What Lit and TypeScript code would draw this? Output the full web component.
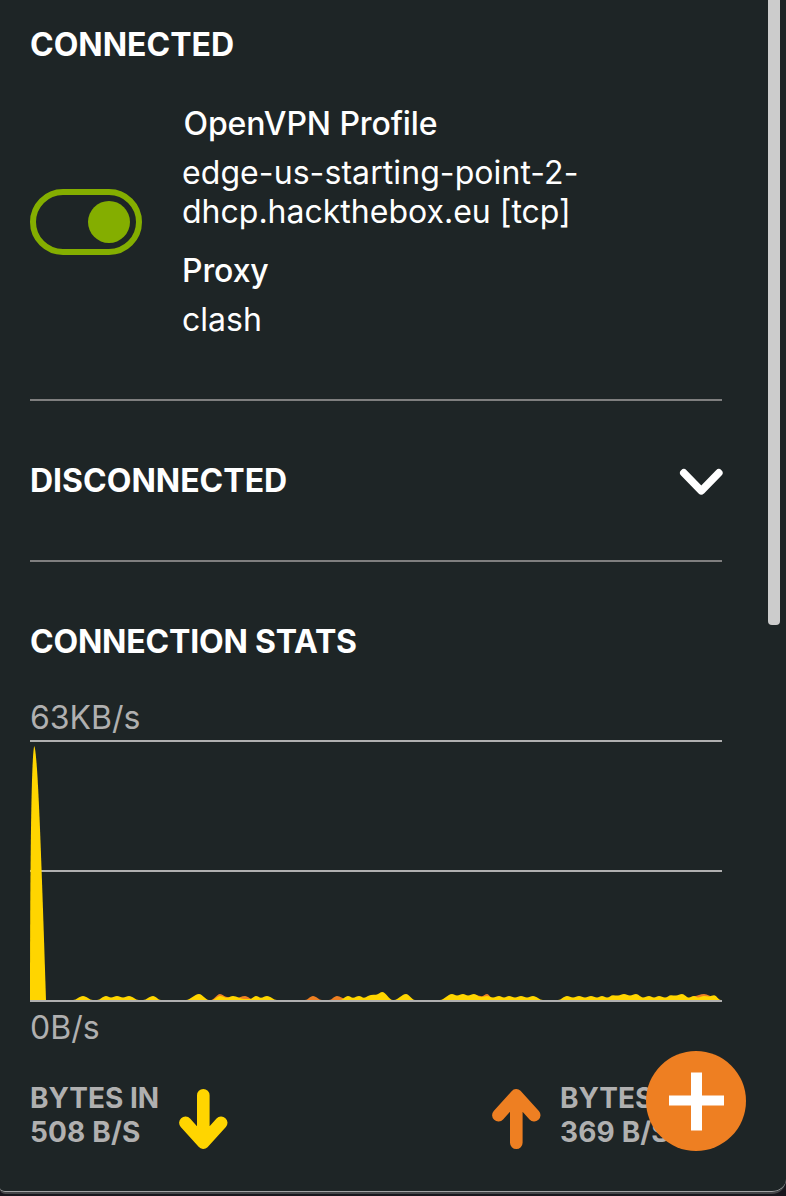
import { LitElement, html, css, svg } from "lit";
import { customElement } from "lit/decorators.js";

type Point = [x: number, height: number];

const BASE = 260;

// Each run is a stretch of traffic between two idle moments.
const OUT: Point[][] = [
  [[181, 0], [190, 6], [197, 3], [206, 2], [215, 4], [224, 0]],
  [[275, 0], [283, 4], [292, 0]],
  [[299, 0], [307, 4], [316, 1], [322, 0]],
  [[444, 0], [446, 4.5], [452, 3.8], [457, 6], [464, 0]],
  [[655, 0], [664, 3.8], [674, 6], [684, 3], [689, 0]],
];

const IN: Point[][] = [
  [[43, 0], [53, 4], [63, 0]],
  [[67, 0], [76, 4], [81, 2.6], [87, 4], [93, 2.6], [99, 4], [109, 0]],
  [[113, 0], [123, 4], [131, 0]],
  [[156, 0], [169, 6], [179, 0]],
  [[182, 0], [190, 4], [197, 2.3], [203, 4], [214, 1], [220, 1], [226, 4], [231, 2.3], [237, 4], [247, 0]],
  [[310, 0], [318, 4], [323, 2.3], [329, 4], [334, 2.3], [341, 5], [346, 5.2], [352, 8], [363, 0]],
  [[364, 0], [376, 6], [385, 0]],
  [[410, 0], [422, 6], [427, 4.6], [433, 6], [438, 4.6], [444, 6], [451, 3], [457, 4], [463, 2.4], [469, 4], [474, 2.4], [479, 4], [485, 2.4], [491, 4], [497, 2.4], [503, 4], [513, 0]],
  [[528, 0], [537, 4], [543, 2.4], [549, 4], [555, 2.4], [561, 4], [567, 2.4], [572, 4], [577, 2.4], [583, 4.8], [588, 4.4], [594, 6], [600, 4.6], [606, 6], [613, 2.6], [619, 4], [624, 2.4], [629, 4], [635, 2.4], [641, 4.8], [646, 4.4], [652, 6], [659, 2.4], [664, 4], [668, 2.6], [674, 4], [679, 3.6], [684, 4.8], [691, 0]],
];

function area(run: Point[]): string {
  let d = `M${run[0][0]} ${BASE}`;
  for (let i = 1; i < run.length; i++) {
    const [x0, h0] = run[i - 1];
    const [x1, h1] = run[i];
    const k = (x1 - x0) * 0.36;
    d += `C${x0 + k} ${BASE - h0} ${x1 - k} ${BASE - h1} ${x1} ${BASE - h1}`;
  }
  return d + "Z";
}

@customElement("traffic-chart")
export class TrafficChart extends LitElement {
  static styles = css`
    :host { display: block; height: 262px; }
    .plot { display: block; width: 692px; height: 262px; }
    .grid { fill: #b0b0b0; }
    .in { fill: #ffd500; }
    .out { fill: #ee7f22; }
  `;

  render() {
    return html`<svg class="plot" viewBox="0 0 692 262">
      <rect class="grid" width="692" height="2" />
      <rect class="grid" y="130" width="692" height="2" />
      ${OUT.map((r) => svg`<path class="out" d=${area(r)} />`)}
      ${IN.map((r) => svg`<path class="in" d=${area(r)} />`)}
      <path class="in" d="M0 260C0 150 1 14 4.3 6C7.5 14 10.5 90 16 260Z" />
      <rect class="grid" y="260" width="692" height="2" />
    </svg>`;
  }
}

@customElement("app-root")
export class AppRoot extends LitElement {
  static styles = css`
    :host {
      display: block;
      position: relative;
      box-sizing: border-box;
      width: 786px;
      height: 1196px;
      overflow: hidden;
      background: #17151c;
      color: #fff;
      font: 400 32px/39px Inter, "Liberation Sans", sans-serif;
    }
    .window {
      position: relative;
      display: flex;
      justify-content: space-between;
      box-sizing: border-box;
      height: 1194px;
      border: solid #434447;
      border-width: 0 0 2px 0;
      border-radius: 0 0 14px 5px;
      background: #1e2526;
      box-shadow: inset 0 -1px #a0a1a3;
      overflow: hidden;
    }
    .content { width: 692px; padding: 25px 0 0 30px; }
    .track { width: 18px; }
    .thumb { width: 12px; height: 625px; background: #ccc; border-radius: 0 0 4px 4px; }
    .title { margin: 0; font-size: 32px; font-weight: 700; white-space: nowrap; }
    .rule { height: 2px; background: #7f7f7f; }
    .connection { display: flex; align-items: center; gap: 40px; margin: 40px 0 60px; }
    .toggle {
      display: flex;
      justify-content: flex-end;
      align-items: center;
      box-sizing: border-box;
      width: 112px;
      height: 66px;
      padding: 0 6px;
      border: 6px solid #84ae00;
      border-radius: 33px;
    }
    .knob { width: 42px; height: 42px; border-radius: 50%; background: #84ae00; }
    .details { display: grid; gap: 10px; white-space: nowrap; }
    .label { font-weight: 500; letter-spacing: -0.1px; }
    .first { padding-left: 1.5px; }
    .proxy { margin-top: 10px; }
    .host { letter-spacing: 0.08px; }
    .domain { letter-spacing: 0; }
    .disconnected { display: flex; justify-content: space-between; align-items: center; height: 159px; }
    .chevron { display: block; width: 44px; height: 28px; margin: 3px -1px 0 0; }
    .stats { margin: 60px 0 37px; letter-spacing: -0.2px; }
    .axis { color: #b0b0b0; }
    .top { margin-bottom: 3px; }
    .bottom { margin-top: 6px; }
    .totals { display: flex; justify-content: space-between; margin-top: 34px; width: 692px; }
    .total {
      display: flex;
      gap: 20px;
      color: #b0b0b0;
      font-size: 28px;
      line-height: 34px;
      font-weight: 700;
      white-space: nowrap;
    }
    .amount { width: 129px; }
    .rate { letter-spacing: 0.15px; }
    .outgoing { width: 162px; }
    .arrow { display: block; flex: none; width: 50px; height: 62px; margin-top: 7px; margin-left: -1px; }
    .up { margin-right: -1px; }
    .add {
      position: absolute;
      left: 646px;
      top: 1051px;
      width: 100px;
      height: 100px;
    }
  `;

  render() {
    return html`
      <div class="window">
        <main class="content">
          <h2 class="title connected">CONNECTED</h2>
          <section class="connection">
            <div class="toggle" role="switch" aria-checked="true"><div class="knob"></div></div>
            <div class="details">
              <div class="label first">OpenVPN Profile</div>
              <div class="name host">edge-us-starting-point-2-<br /><span class="domain">dhcp.hackthebox.eu [tcp]</span></div>
              <div class="label proxy">Proxy</div>
              <div class="name">clash</div>
            </div>
          </section>
          <div class="rule"></div>
          <section class="disconnected">
            <h2 class="title">DISCONNECTED</h2>
            <svg class="chevron" viewBox="0 0 44 28">
              <path d="M4.8 4.9L22.3 22.8L39.8 4.9" fill="none" stroke="#fff" stroke-width="7.6" stroke-linecap="round" stroke-linejoin="round" />
            </svg>
          </section>
          <div class="rule"></div>
          <h2 class="title stats">CONNECTION STATS</h2>
          <div class="axis top">63KB/s</div>
          <traffic-chart></traffic-chart>
          <div class="axis bottom">0B/s</div>
          <div class="totals">
            <div class="total">
              <div class="amount">BYTES IN<br /><span class="rate">508 B/S</span></div>
              <svg class="arrow" viewBox="0 0 50 62">
                <path d="M25.3 7.2V54M7.4 34.8L25.3 54.6L43.2 34.8" fill="none" stroke="#ffd500" stroke-width="12.6" stroke-linecap="round" stroke-linejoin="round" />
              </svg>
            </div>
            <div class="total">
              <svg class="arrow up" viewBox="0 0 50 62">
                <path d="M25.3 54.8V8M7.4 27.2L25.3 7.4L43.2 27.2" fill="none" stroke="#ee7f22" stroke-width="12.6" stroke-linecap="round" stroke-linejoin="round" />
              </svg>
              <div class="outgoing">BYTES OUT<br /><span class="rate">369 B/S</span></div>
            </div>
          </div>
        </main>
        <div class="track"><div class="thumb"></div></div>
      </div>
      <svg class="add" viewBox="0 0 100 100">
        <circle cx="50" cy="50" r="50" fill="#ee7f22" />
        <path d="M45 21.5H56V44.5H78V54.5H56V79.5H45V54.5H23V44.5H45Z" fill="#fff" />
      </svg>
    `;
  }
}
